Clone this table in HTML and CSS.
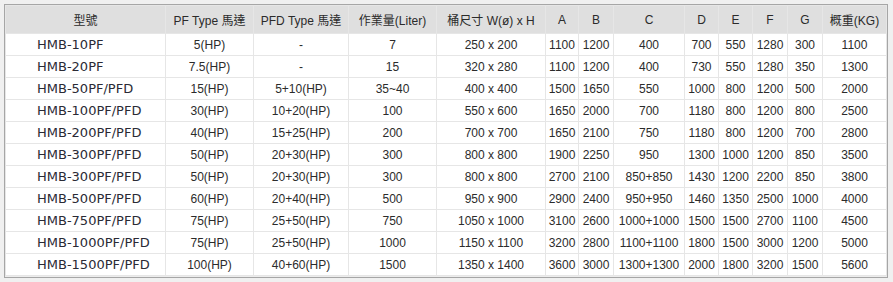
FILE: index.html
```html
<!DOCTYPE html>
<html lang="zh-Hant">
<head>
<meta charset="utf-8">
<title>規格表</title>
<link rel="stylesheet" href="styles.css">
</head>
<body>
<div class="wrap">
<table class="spec">
<colgroup>
<col class="w-model"><col class="w-pf"><col class="w-pfd"><col class="w-vol"><col class="w-size">
<col class="w-a"><col class="w-b"><col class="w-c"><col class="w-d"><col class="w-e"><col class="w-f"><col class="w-g"><col class="w-kg">
</colgroup>
<thead>
<tr><th>型號</th><th>PF Type 馬達</th><th>PFD Type 馬達</th><th>作業量(Liter)</th><th>桶尺寸 W(ø) x H</th><th>A</th><th>B</th><th>C</th><th>D</th><th>E</th><th>F</th><th>G</th><th>概重(KG)</th></tr>
</thead>
<tbody>
<tr><td class="model">HMB-10PF</td><td>5(HP)</td><td>-</td><td>7</td><td>250 x 200</td><td>1100</td><td>1200</td><td>400</td><td>700</td><td>550</td><td>1280</td><td>300</td><td>1100</td></tr>
<tr><td class="model">HMB-20PF</td><td>7.5(HP)</td><td>-</td><td>15</td><td>320 x 280</td><td>1100</td><td>1200</td><td>400</td><td>730</td><td>550</td><td>1280</td><td>350</td><td>1300</td></tr>
<tr><td class="model">HMB-50PF/PFD</td><td>15(HP)</td><td>5+10(HP)</td><td>35~40</td><td>400 x 400</td><td>1500</td><td>1650</td><td>550</td><td>1000</td><td>800</td><td>1200</td><td>500</td><td>2000</td></tr>
<tr><td class="model">HMB-100PF/PFD</td><td>30(HP)</td><td>10+20(HP)</td><td>100</td><td>550 x 600</td><td>1650</td><td>2000</td><td>700</td><td>1180</td><td>800</td><td>1200</td><td>800</td><td>2500</td></tr>
<tr><td class="model">HMB-200PF/PFD</td><td>40(HP)</td><td>15+25(HP)</td><td>200</td><td>700 x 700</td><td>1650</td><td>2100</td><td>750</td><td>1180</td><td>800</td><td>1200</td><td>700</td><td>2800</td></tr>
<tr><td class="model">HMB-300PF/PFD</td><td>50(HP)</td><td>20+30(HP)</td><td>300</td><td>800 x 800</td><td>1900</td><td>2250</td><td>950</td><td>1300</td><td>1000</td><td>1200</td><td>850</td><td>3500</td></tr>
<tr><td class="model">HMB-300PF/PFD</td><td>50(HP)</td><td>20+30(HP)</td><td>300</td><td>800 x 800</td><td>2700</td><td>2100</td><td>850+850</td><td>1430</td><td>1200</td><td>2200</td><td>850</td><td>3800</td></tr>
<tr><td class="model">HMB-500PF/PFD</td><td>60(HP)</td><td>20+40(HP)</td><td>500</td><td>950 x 900</td><td>2900</td><td>2400</td><td>950+950</td><td>1460</td><td>1350</td><td>2500</td><td>1000</td><td>4000</td></tr>
<tr><td class="model">HMB-750PF/PFD</td><td>75(HP)</td><td>25+50(HP)</td><td>750</td><td>1050 x 1000</td><td>3100</td><td>2600</td><td>1000+1000</td><td>1500</td><td>1500</td><td>2700</td><td>1100</td><td>4500</td></tr>
<tr><td class="model">HMB-1000PF/PFD</td><td>75(HP)</td><td>25+50(HP)</td><td>1000</td><td>1150 x 1100</td><td>3200</td><td>2800</td><td>1100+1100</td><td>1800</td><td>1500</td><td>3000</td><td>1200</td><td>5000</td></tr>
<tr><td class="model">HMB-1500PF/PFD</td><td>100(HP)</td><td>40+60(HP)</td><td>1500</td><td>1350 x 1400</td><td>3600</td><td>3000</td><td>1300+1300</td><td>2000</td><td>1800</td><td>3200</td><td>1500</td><td>5600</td></tr>
</tbody>
</table>
</div>
</body>
</html>
```

FILE: styles.css
```css
html, body {
  margin: 0;
  padding: 0;
  background: #f0f0f0;
}

.wrap {
  display: inline-block;
  margin: 4px 0 0 4px;
  border: 1px solid #a6a6a6;
  padding: 0 0 1px 0;
  background: #ececec;
}

.spec {
  border-collapse: separate;
  border-spacing: 1px;
  table-layout: fixed;
  width: 882px;
  background: #e6e6e6;
  font-family: "Liberation Sans", Arial, "Noto Sans CJK TC", sans-serif;
  font-size: 12px;
  color: #2b2b2b;
}

.spec th,
.spec td {
  padding: 0;
  text-align: center;
  white-space: nowrap;
  overflow: hidden;
}

.spec th {
  height: 27px;
  background: #dfdfdf;
  font-weight: normal;
}

.spec td {
  height: 21px;
  background: #ffffff;
}

.spec td.model {
  text-align: left;
  padding-left: 31px;
  font-family: "DejaVu Sans", Verdana, sans-serif;
  font-size: 13px;
  color: #2a2a35;
}

.w-model { width: 159px; }
.w-pf { width: 87px; }
.w-pfd { width: 94px; }
.w-vol { width: 87px; }
.w-size { width: 108px; }
.w-a { width: 32px; }
.w-b { width: 34px; }
.w-c { width: 70px; }
.w-d { width: 33px; }
.w-e { width: 33px; }
.w-f { width: 34px; }
.w-g { width: 34px; }
.w-kg { width: 63px; }
```
